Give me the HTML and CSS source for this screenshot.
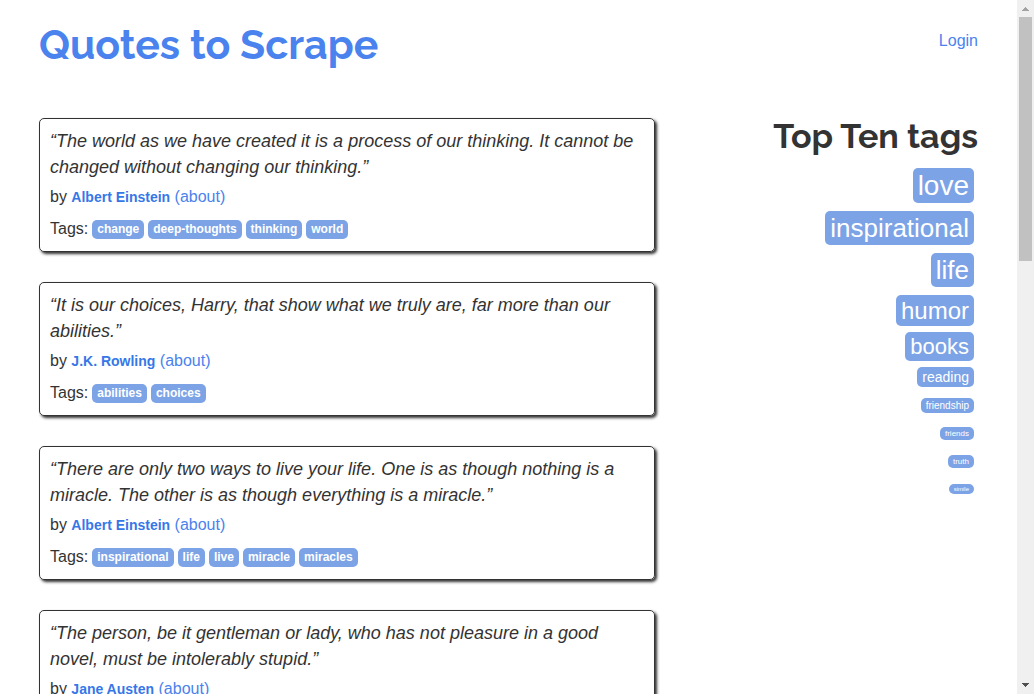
FILE: index.html
```html
<!DOCTYPE html>
<html lang="en">
<head>
<meta charset="utf-8">
<title>Quotes to Scrape</title>
<link rel="stylesheet" href="styles.css">
</head>
<body>
<div class="viewport">
<div class="page">
  <header class="header">
    <h1 class="title"><a href="#">Quotes to Scrape</a></h1>
    <a class="login" href="#">Login</a>
  </header>
  <div class="columns">
    <main class="quotes">
      <article class="quote">
        <p class="text">“The world as we have created it is a process of our thinking. It cannot be changed without changing our thinking.”</p>
        <p class="byline">by <strong class="author">Albert Einstein</strong> <a href="#">(about)</a></p>
        <div class="tags">Tags: <a class="tag" href="#">change</a> <a class="tag" href="#">deep-thoughts</a> <a class="tag" href="#">thinking</a> <a class="tag" href="#">world</a></div>
      </article>
      <article class="quote">
        <p class="text">“It is our choices, Harry, that show what we truly are, far more than our abilities.”</p>
        <p class="byline">by <strong class="author">J.K. Rowling</strong> <a href="#">(about)</a></p>
        <div class="tags">Tags: <a class="tag" href="#">abilities</a> <a class="tag" href="#">choices</a></div>
      </article>
      <article class="quote">
        <p class="text">“There are only two ways to live your life. One is as though nothing is a miracle. The other is as though everything is a miracle.”</p>
        <p class="byline">by <strong class="author">Albert Einstein</strong> <a href="#">(about)</a></p>
        <div class="tags">Tags: <a class="tag" href="#">inspirational</a> <a class="tag" href="#">life</a> <a class="tag" href="#">live</a> <a class="tag" href="#">miracle</a> <a class="tag" href="#">miracles</a></div>
      </article>
      <article class="quote">
        <p class="text">“The person, be it gentleman or lady, who has not pleasure in a good novel, must be intolerably stupid.”</p>
        <p class="byline">by <strong class="author">Jane Austen</strong> <a href="#">(about)</a></p>
      </article>
    </main>
    <aside class="top-tags">
      <h2 class="top-title">Top Ten tags</h2>
      <ul class="top-list">
        <li class="row row-xxl"><a class="top-tag s28" href="#">love</a></li>
        <li class="row row-xl"><a class="top-tag s26" href="#">inspirational</a></li>
        <li class="row row-xl"><a class="top-tag s26" href="#">life</a></li>
        <li class="row row-l"><a class="top-tag s24" href="#">humor</a></li>
        <li class="row row-m"><a class="top-tag s22" href="#">books</a></li>
        <li class="row"><a class="top-tag s14" href="#">reading</a></li>
        <li class="row"><a class="top-tag s10" href="#">friendship</a></li>
        <li class="row"><a class="top-tag s8" href="#">friends</a></li>
        <li class="row"><a class="top-tag s8" href="#">truth</a></li>
        <li class="row"><a class="top-tag s6" href="#">simile</a></li>
      </ul>
    </aside>
  </div>
</div>
<div class="scrollbar" aria-hidden="true">
  <svg class="arrow" viewBox="0 0 17 17"><path d="M5 11h7v-1h-1V9h-1V8H9V7H8v1H7v1H6v1H5z" fill="#a3a3a3"/></svg>
  <div class="track"><div class="thumb"></div></div>
  <svg class="arrow" viewBox="0 0 17 17"><path d="M5 6h7v1h-1v1h-1v1H9v1H8V9H7V8H6V7H5z" fill="#505050"/></svg>
</div>
</div>
</body>
</html>
```

FILE: styles.css
```css
* { box-sizing: border-box; }

body {
  margin: 0;
  background: #fff;
  color: #333;
  font: 16px/26px "Liberation Sans", Arial, sans-serif;
}

a {
  color: #4a82ee;
  text-decoration: none;
}

p, h1, h2, ul { margin: 0; }

.viewport {
  display: flex;
  height: 100vh;
  overflow: hidden;
}

.page {
  flex: 1;
  min-width: 0;
  padding: 19px 39px 0;
}

.header {
  display: flex;
  justify-content: space-between;
  align-items: flex-start;
  padding-bottom: 47px;
}

.title, .top-title {
  font-family: Raleway, Lato, sans-serif;
  font-weight: 700;
  white-space: nowrap;
}

.title {
  font-size: 41px;
  line-height: 52px;
}

.login { padding-top: 9px; }

.columns {
  display: grid;
  grid-template-columns: minmax(0, 616fr) minmax(0, 323fr);
}

.quotes {
  display: flex;
  flex-direction: column;
  gap: 30px;
}

.quote {
  padding: 9px 10px;
  border: 1px solid #333;
  border-radius: 5px;
  box-shadow: 2px 2px 3px #333;
}

.text {
  font-size: 18px;
  font-style: italic;
}

.byline { padding-top: 4px; }

.author {
  font-size: 14px;
  color: #3677e8;
}

.tags {
  display: flex;
  flex-wrap: wrap;
  align-items: center;
  gap: 4px;
  padding-top: 6px;
}

.tag {
  padding: 0 5px;
  border-radius: 5px;
  background: #7ca3e6;
  color: #fff;
  font-size: 12px;
  font-weight: 700;
  line-height: 19px;
}

.top-tags { text-align: right; }

.top-title {
  font-size: 34px;
  line-height: 36px;
  padding-bottom: 10px;
}

.top-list {
  padding: 0 4px 0 0;
  list-style: none;
}

.row {
  display: flex;
  justify-content: flex-end;
  align-items: center;
  height: 28px;
}

.row-m { height: 34px; }
.row-l { height: 38px; }
.row-xl { height: 42px; }
.row-xxl { height: 43px; }

.top-tag {
  padding: 0 5px;
  border-radius: 5px;
  background: #7ca3e6;
  color: #fff;
}

.s28 { font-size: 28px; line-height: 35px; }
.s26 { font-size: 26px; line-height: 34px; }
.s24 { font-size: 24px; line-height: 31px; }
.s22 { font-size: 22px; line-height: 29px; }
.s14 { font-size: 14px; line-height: 20px; }
.s10 { font-size: 10px; line-height: 15px; }
.s8 { font-size: 8px; line-height: 13px; }
.s6 { font-size: 6px; line-height: 10px; }

.scrollbar {
  display: flex;
  flex-direction: column;
  width: 17px;
  background: #f0f0f0;
}

.arrow {
  display: block;
  width: 17px;
  height: 17px;
  shape-rendering: crispEdges;
}

.track {
  flex: 1;
  padding: 0 2px;
}

.thumb {
  height: 37%;
  background: #c1c1c1;
}
```
